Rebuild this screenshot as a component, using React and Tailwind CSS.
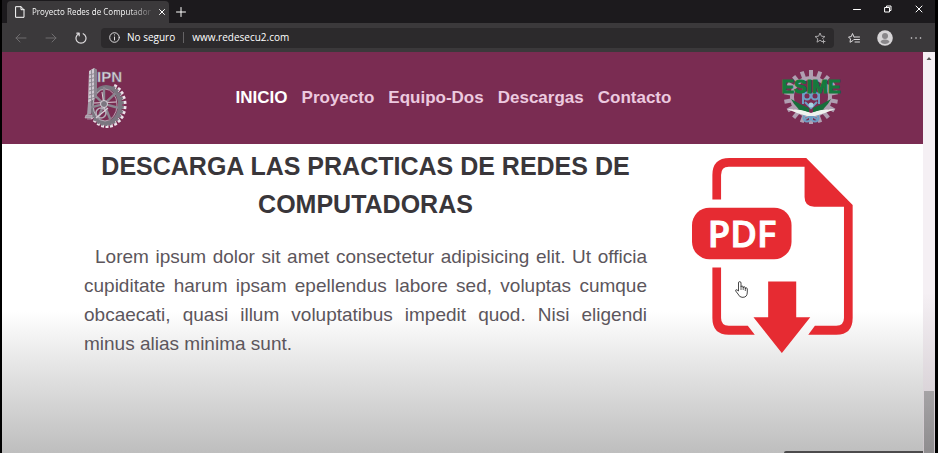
import React from "react";

const line = { fill: "none", stroke: "currentColor", strokeWidth: 1, strokeLinecap: "round", strokeLinejoin: "round" };

function Teeth({ count, from = 0, to = count, cx, cy, inner, outer, squash = 1, ...rest }) {
  return (
    <g {...rest}>
      {Array.from({ length: to - from }, (_, k) => {
        const a = ((k + from) / count) * Math.PI * 2 - Math.PI / 2;
        return (
          <line
            key={k}
            x1={cx + Math.cos(a) * inner * squash}
            y1={cy + Math.sin(a) * inner}
            x2={cx + Math.cos(a) * outer * squash}
            y2={cy + Math.sin(a) * outer}
          />
        );
      })}
    </g>
  );
}

function IpnLogo() {
  return (
    <svg className="h-16 w-11" viewBox="0 0 44 64" role="img" aria-label="IPN">
      <g fill="none">
        <Teeth count={26} from={2} to={18} cx={23} cy={39} inner={18} outer={23} squash={0.85} stroke="#ece2ea" strokeWidth="3" />
        <Teeth count={26} from={2} to={18} cx={22} cy={39} inner={17} outer={21} squash={0.85} stroke="#7b7680" strokeWidth="3" />
        <ellipse cx="22" cy="39" rx="14" ry="18" stroke="#7b7680" strokeWidth="4" />
        <ellipse cx="21" cy="39" rx="12" ry="16" stroke="#c9c1ca" strokeWidth="0.8" />
        <Teeth count={7} cx={20} cy={38} inner={2} outer={17} squash={0.85} stroke="#8b8690" strokeWidth="2.4" />
        <path d="M10 37L32 36M18 26L21 46" stroke="#d8d0d8" strokeWidth="1" />
        <circle cx="17" cy="47" r="5" stroke="#b5aeb8" strokeWidth="1.6" />
        <path d="M12 52L24 42" stroke="#d8d0d8" strokeWidth="1.2" />
        <circle cx="20" cy="38" r="3.500" fill="#7b7680" stroke="#d8d0d8" />
      </g>
      <path d="M5 5L10 2L13 4V31L4 37Z" fill="#cfc8d1" />
      <path d="M10 2L13 4V31L10 33Z" fill="#8b8690" />
      <path d="M5 9L13 7M5 13L13 11M5 17L13 15M5 21L13 19M5 25L13 23M5 29L13 27M4 33L12 31M7.500 4V35" stroke="#8b8690" strokeWidth="0.900" />
      <path d="M4 37L7 35V48L3 49Z" fill="#a49ca8" />
      <path d="M2 49H8V52H1ZM3 53H8" fill="#a49ba6" stroke="#c9c1ca" strokeWidth="0.600" />
      <text x="13" y="16" fill="#d8d1da" stroke="#77727c" strokeWidth="0.500" fontFamily="Liberation Sans, sans-serif" fontSize="15" fontWeight="700">IPN</text>
    </svg>
  );
}

function EsimeLogo() {
  return (
    <svg className="h-16 w-16 overflow-visible" viewBox="0 0 64 64" role="img" aria-label="ESIME">
      <Teeth count={18} cx={32} cy={31} inner={19} outer={27} stroke="#b09fb1" strokeWidth="4" />
      <circle cx="32" cy="31" r="19" fill="none" stroke="#b09fb1" strokeWidth="4" />
      <g fill="none" stroke="#6f9fc4" strokeWidth="2">
        <circle cx="28" cy="30" r="3.500" />
        <circle cx="36" cy="30" r="3.500" />
        <path d="M24 24V38M40 24V38M26 36L32 42L38 36" />
        <circle cx="28" cy="52" r="3.500" />
        <circle cx="36" cy="52" r="3.500" />
        <path d="M25 45L39 54M39 45L25 54" />
      </g>
      <path d="M12 33Q20 38 30 42V48Q18 45 12 33ZM52 33Q44 38 34 42V48Q46 45 52 33Z" fill="#176e3b" />
      <path d="M8 43L24 44L32 47L40 44L56 43L46 47L36 50H28L18 47Z" fill="#f0f2ef" />
      <path d="M18 43L28 42L30 46ZM46 43L36 42L34 46Z" fill="#176e3b" />
      <circle cx="32" cy="39" r="2.500" fill="#a8d6e2" />
      <text x="32" y="27" textAnchor="middle" fill="#147a3d" stroke="#147a3d" strokeWidth="1" fontFamily="Liberation Sans, sans-serif" fontSize="19" fontWeight="700">ESIME</text>
    </svg>
  );
}

function PdfIcon() {
  return (
    <svg className="block w-full" viewBox="36 41 482 585" role="img" aria-label="Descargar PDF">
      <g fill="#e62b32">
        <path d="M97 165V92Q97 41 148 41H378L517 182V520Q517 570 468 570H384L404 543H468Q491 543 491 520V187H402Q373 187 373 158V67H146Q123 67 123 92V165Z" />
        <path d="M97 369V520Q97 570 146 570H224L203 543H146Q123 543 123 520V369Z" />
        <rect x="36" y="190" width="298" height="154" rx="52" />
        <path d="M264 411H348V518H390L305 625L220 518H264Z" />
      </g>
      <text x="186" y="306" textAnchor="middle" fill="#fff" stroke="#fff" strokeWidth="3" fontFamily="Open Sans, sans-serif" fontSize="109" fontWeight="600">PDF</text>
    </svg>
  );
}

function Hand() {
  return (
    <svg className="pointer-events-none absolute top-[123px] left-[43px] h-[17px] w-[13px]" viewBox="0 0 13 17" aria-hidden="true">
      <path d="M3.500 10V2Q3.500 .600 4.700 .600T6 2V6Q6 5 7 5T8.200 6V7Q8.200 5.700 9.200 5.700T10.300 7V8Q10.400 6.700 11.300 6.800T12.300 8V11Q12.300 16.300 8 16.300H7Q4.500 16.300 3 13L.700 10Q.500 8.500 1.700 8.700Z" fill="#fff" stroke="#333" strokeWidth="0.900" strokeLinejoin="round" />
      <path d="M6 6V9M8.200 7V9M10.300 8V10" stroke="#333" strokeWidth="0.800" />
    </svg>
  );
}

function TabBar() {
  return (
    <div className="flex h-[23px] items-stretch bg-[#1c1a1d] pt-px text-white">
      <div className="ml-[5px] flex w-[162px] items-center gap-[7px] rounded-t-sm bg-[#3b393b] pr-1.5 pl-2">
        <svg className="h-3 w-[10px] shrink-0" viewBox="0 0 10 12" {...line}>
          <path d="M1 .700H6L9 3.700V11.300H1ZM6 .700V3.700H9" />
        </svg>
        <span className="bg-linear-to-r from-white from-80% to-white/20 bg-clip-text font-['Noto_Sans',sans-serif] text-[8px] leading-4 whitespace-nowrap text-transparent">
          Proyecto Redes de Computador
        </span>
        <button aria-label="Cerrar pestaña" className="ml-auto shrink-0">
          <svg className="size-2" viewBox="0 0 8 8" {...line}><path d="M1.500 1.500L6.500 6.500M6.500 1.500L1.500 6.500" /></svg>
        </button>
      </div>
      <button aria-label="Nueva pestaña" className="ml-[7px]">
        <svg className="size-[10px]" viewBox="0 0 10 10" {...line}><path d="M5 .500V9.500M.500 5H9.500" /></svg>
      </button>
      <div className="mr-3 mb-[7px] ml-auto flex items-center gap-[23px]">
        <button aria-label="Minimizar"><svg className="size-2" viewBox="0 0 8 8" {...line}><path d="M.500 4.500H7.500" /></svg></button>
        <button aria-label="Restaurar"><svg className="size-2" viewBox="0 0 8 8" {...line}><path d="M1 2.500H5.500V7H1ZM2.500 2.500V1H7V5.500H5.500" /></svg></button>
        <button aria-label="Cerrar"><svg className="size-2" viewBox="0 0 8 8" {...line}><path d="M1 1L7 7M7 1L1 7" /></svg></button>
      </div>
    </div>
  );
}

function Toolbar() {
  return (
    <div className="flex h-[29px] items-center bg-[#3b393b] text-[#dedcde]">
      <div className="flex w-[99px] items-center gap-[18px] pl-[13px]">
        <button aria-label="Atrás" className="text-[#6e6c6e]"><svg className="size-3" viewBox="0 0 12 12" {...line}><path d="M11 6H1M5 2L1 6L5 10" /></svg></button>
        <button aria-label="Adelante" className="text-[#6e6c6e]"><svg className="size-3" viewBox="0 0 12 12" {...line}><path d="M1 6H11M7 2L11 6L7 10" /></svg></button>
        <button aria-label="Actualizar"><svg className="size-3" viewBox="0 0 12 12" {...line} strokeWidth="1.200"><path d="M3.800 1.700A5 5 0 1 0 8.200 1.700M1.800 1.200H4.200V3.800" /></svg></button>
      </div>
      <div className="flex h-5 flex-1 items-center rounded-sm bg-[#2c2a2c] pr-2 pl-2">
        <svg className="size-[11px] shrink-0" viewBox="0 0 11 11" {...line}><circle cx="5.500" cy="5.500" r="4.800" /><path d="M5.500 5V8M5.500 2.800V3" /></svg>
        <label htmlFor="url" className="ml-[7px] text-[10px] font-medium whitespace-nowrap text-white">No seguro</label>
        <span className="mx-2 h-[11px] w-px bg-[#656365]" />
        <input id="url" defaultValue="www.redesecu2.com" className="min-w-0 flex-1 bg-transparent text-[10px] font-medium text-white outline-none" />
        <button aria-label="Añadir a favoritos" className="text-[#aaa8aa]">
          <svg className="size-3" viewBox="0 0 12 12" {...line}><path d="M8 9.500L6 8.300L3 10.200L3.800 6.800L1 4.500L4.600 4.200L6 1L7.400 4.200L11 4.500L8.500 6.600M8 9.500H11M9.500 8V11" /></svg>
        </button>
      </div>
      <div className="flex items-center gap-[17px] pr-[13px] pl-[14px]">
        <button aria-label="Favoritos"><svg className="h-3 w-3" viewBox="0 0 12 12" {...line}><path d="M6 5L4.500 1.500L3.300 4.600L.500 5L2.500 7L2 10.300L5 8.500M6.500 5H11.500M6 7.500H11.500M7 10H11.500" /></svg></button>
        <button aria-label="Perfil">
          <svg className="size-4" viewBox="0 0 16 16"><circle cx="8" cy="8" r="7.800" fill="#d7d5d7" /><circle cx="8" cy="6" r="3" fill="#89878a" /><path d="M3.500 12Q4 9.500 8 9.500T12.500 12Q10.800 14 8 14T3.500 12Z" fill="#89878a" /></svg>
        </button>
        <button aria-label="Más opciones"><svg className="h-3 w-3" viewBox="0 0 12 12" fill="currentColor"><circle cx="1.500" cy="6" r=".800" /><circle cx="6" cy="6" r=".800" /><circle cx="10.500" cy="6" r=".800" /></svg></button>
      </div>
    </div>
  );
}

const links = ["Proyecto", "Equipo-Dos", "Descargas", "Contacto"];

export default function App() {
  return (
    <div className="flex h-screen flex-col overflow-hidden border-r-3 border-l-2 border-black bg-black">
      <header className="shrink-0 font-['Open_Sans',sans-serif]">
        <TabBar />
        <Toolbar />
      </header>
      <div className="flex min-h-0 flex-1 font-['Liberation_Sans',Arial,sans-serif]">
        <div className="relative flex min-w-0 flex-1 flex-col bg-white">
          <nav className="flex shrink-0 items-center justify-between bg-[#7a2c52] py-[14px] pr-20 pl-[82px]">
            <a href="#ipn"><IpnLogo /></a>
            <ul className="flex gap-[14px] text-[17px] leading-6 font-bold text-[#ecc9df]">
              <li><a href="#inicio" className="text-white">INICIO</a></li>
              {links.map((l) => (
                <li key={l}><a href={"#" + l.toLowerCase()}>{l}</a></li>
              ))}
            </ul>
            <a href="#esime"><EsimeLogo /></a>
          </nav>
          <main className="flex flex-1 items-start gap-[45px] bg-linear-to-b from-white from-54% to-[#bebebe] pr-[70px] pl-[82px]">
            <section className="flex-1 pt-[3px]">
              <h1 className="text-center text-[25px] leading-[38px] font-bold text-[#39363a]">
                DESCARGA LAS PRACTICAS DE REDES DE COMPUTADORAS
              </h1>
              <p className="mt-[19px] indent-[11px] text-justify text-[19px] leading-[29px] text-[#5c565c]">
                Lorem ipsum dolor sit amet consectetur adipisicing elit. Ut officia cupiditate harum ipsam epellendus labore sed, voluptas cumque obcaecati, quasi illum voluptatibus impedit quod. Nisi eligendi minus alias minima sunt.
              </p>
            </section>
            <a href="#pdf" className="relative mt-[14px] block w-[161px] shrink-0">
              <PdfIcon />
              <Hand />
            </a>
          </main>
          <div className="absolute right-0 bottom-0 h-0.5 w-[139px] rounded-tl-sm bg-[#4c4b4c]" />
        </div>
        <div className="flex w-3 shrink-0 flex-col justify-between bg-linear-to-b from-[#f5f0f4] from-60% to-[#cbc4c9]">
          <svg className="h-3 w-full" viewBox="0 0 11 12" aria-hidden="true"><path d="M3 8L5.500 5L8 8Z" fill="#555" /></svg>
          <div className="mx-px h-[62px] bg-linear-to-b from-[#a5a3a5] to-[#8f8d8f]" />
        </div>
      </div>
    </div>
  );
}
